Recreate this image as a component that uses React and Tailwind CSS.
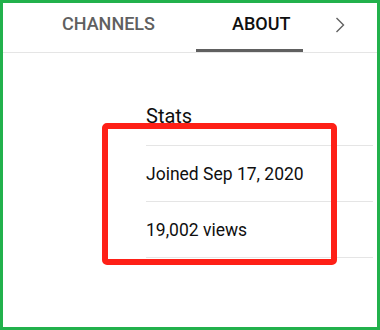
import React from 'react';

const rows = ['Joined Sep 17, 2020', '19,002 views'];

export default function App() {
  return (
    <div className="relative w-[380px] h-[330px] overflow-hidden bg-white border-[3px] border-[#22b14c] font-['Roboto',sans-serif]">
      {/* tabs */}
      <div className="flex h-[50px] border-b border-[#e5e5e5]">
        <div className="w-[193px] pl-[59px] pt-[9px] text-[18px] leading-[24px] font-medium text-[#606060]">CHANNELS</div>
        <div className="w-[107px] h-[49px] pl-[36px] pt-[9px] text-[18px] leading-[24px] font-medium text-[#0f0f0f] border-b-[3px] border-[#606060]">ABOUT</div>
        <div className="ml-[31px] pt-[13px]">
          <svg width="12" height="18" viewBox="0 0 12 18" fill="none">
            <path d="M2.5 2 L9.5 9 L2.5 16" stroke="#606060" strokeWidth="1.4" />
          </svg>
        </div>
      </div>

      {/* stats */}
      <div className="pl-[143px] pr-[4px] pt-[49px] text-[#0f0f0f]">
        <div className="pb-[15px] border-b border-[#e5e5e5] text-[20px] leading-[28px]">Stats</div>
        {rows.map((r) => (
          <div key={r} className="pt-4 pb-[15px] border-b border-[#e5e5e5] text-[17.5px] leading-[24px]">{r}</div>
        ))}
      </div>

      {/* annotation */}
      <div className="absolute left-[99px] top-[120px] w-[235px] h-[142px] border-[6px] border-[#fe2017] rounded-[5px]" />
    </div>
  );
}
